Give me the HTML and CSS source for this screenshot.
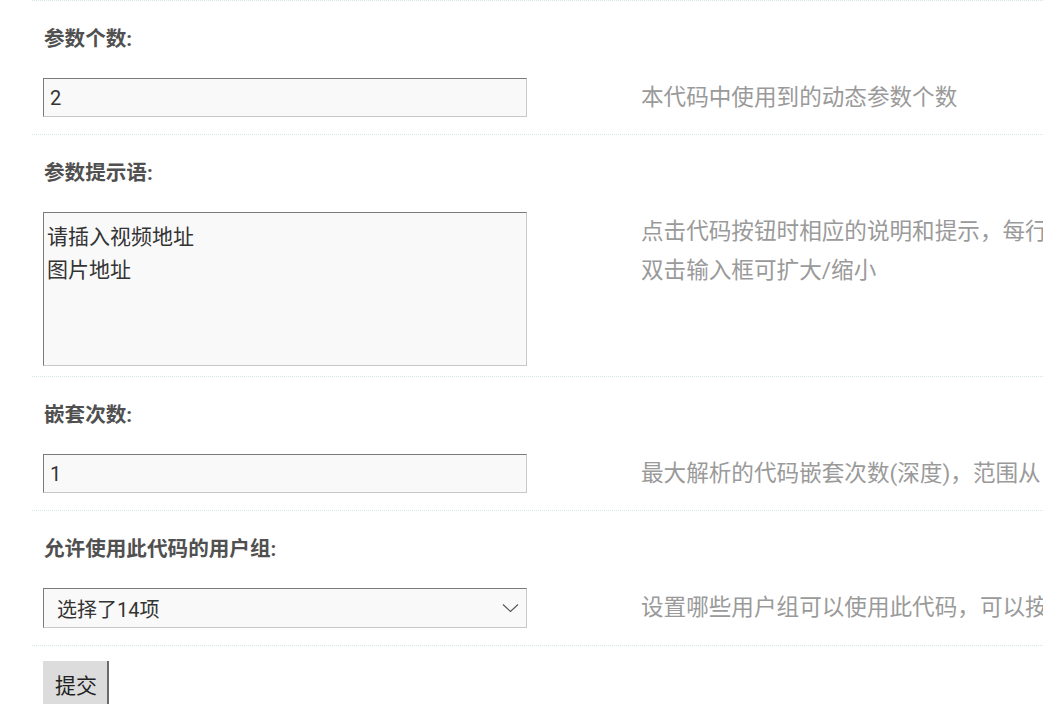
FILE: index.html
```html
<!DOCTYPE html>
<html lang="zh-CN">
<head>
<meta charset="utf-8">
<title>自定义代码设置</title>
<link rel="stylesheet" href="styles.css">
</head>
<body>
<form class="form">
  <section class="row">
    <div class="label">参数个数:</div>
    <div class="ctrl-row">
      <div class="ctrl"><input class="txt" type="text" value="2"></div>
      <div class="tips">本代码中使用到的动态参数个数</div>
    </div>
  </section>
  <section class="row row-area">
    <div class="label">参数提示语:</div>
    <div class="ctrl-row">
      <div class="ctrl"><textarea class="area">请插入视频地址
图片地址</textarea></div>
      <div class="tips">点击代码按钮时相应的说明和提示，每行一个，用于输入参数<br>双击输入框可扩大/缩小</div>
    </div>
  </section>
  <section class="row row-3">
    <div class="label">嵌套次数:</div>
    <div class="ctrl-row">
      <div class="ctrl"><input class="txt" type="text" value="1"></div>
      <div class="tips">最大解析的代码嵌套次数(深度)，范围从 1 到 3</div>
    </div>
  </section>
  <section class="row row-4">
    <div class="label">允许使用此代码的用户组:</div>
    <div class="ctrl-row">
      <div class="ctrl">
        <div class="select">
          <span class="select-text">选择了14项</span>
          <svg class="chev" width="17" height="10" viewBox="0 0 17 10"><path d="M1 1.5 L8.5 8.5 L16 1.5" fill="none" stroke="#555" stroke-width="1.1"/></svg>
        </div>
      </div>
      <div class="tips">设置哪些用户组可以使用此代码，可以按住 CTRL 多选</div>
    </div>
  </section>
  <section class="row row-btn">
    <button class="btn" type="button">提交</button>
  </section>
</form>
</body>
</html>
```

FILE: styles.css
```css
html, body {
  margin: 0;
  padding: 0;
  background: #fff;
  overflow: hidden;
}
body {
  font-family: Roboto, "Noto Sans CJK SC", sans-serif;
  color: #333;
}
.form {
  padding-left: 32px;
  width: 1011px;
  overflow: hidden;
}
.row {
  border-top: 1px dotted #d3e6e8;
  padding-bottom: 17px;
}
.label {
  padding: 23px 0 24px 12px;
  font-size: 20.6px;
  line-height: 30px;
  font-weight: bold;
  color: #505050;
}
.ctrl-row {
  display: flex;
  align-items: flex-start;
}
.ctrl {
  width: 484px;
  padding-left: 11px;
  flex: none;
}
.tips {
  margin-left: 114px;
  font-size: 22.6px;
  line-height: 39px;
  color: #9a9a9a;
  white-space: nowrap;
}
.txt, .area, .select {
  box-sizing: border-box;
  width: 484px;
  display: block;
  margin: 0;
  background: #f9f9f9;
  border-style: solid;
  border-width: 1px;
  border-color: #7a7a7a #c8c8c8 #c8c8c8 #7a7a7a;
  font-family: Roboto, "Noto Sans CJK SC", sans-serif;
  color: #333;
  outline: none;
}
.txt {
  height: 39px;
  padding: 0 6px;
  font-size: 20px;
}
.area {
  height: 154px;
  padding: 8px 3px;
  font-size: 21px;
  line-height: 33px;
  resize: none;
  overflow: hidden;
}
.row-area {
  padding-bottom: 10px;
}
.row-3 {
  padding-bottom: 17px;
}
.select {
  height: 40px;
  display: flex;
  align-items: center;
  justify-content: space-between;
  padding: 0 7px 0 13px;
  font-size: 20px;
}
.chev {
  display: block;
}
.row-btn {
  padding: 15px 0 0 11px;
}
.btn {
  display: block;
  height: 46px;
  padding: 0 10px 0 12px;
  background: #dcdcdc;
  border: none;
  border-right: 2px solid #6a6a6a;
  font-family: Roboto, "Noto Sans CJK SC", sans-serif;
  font-size: 21px;
  color: #222;
}
```
